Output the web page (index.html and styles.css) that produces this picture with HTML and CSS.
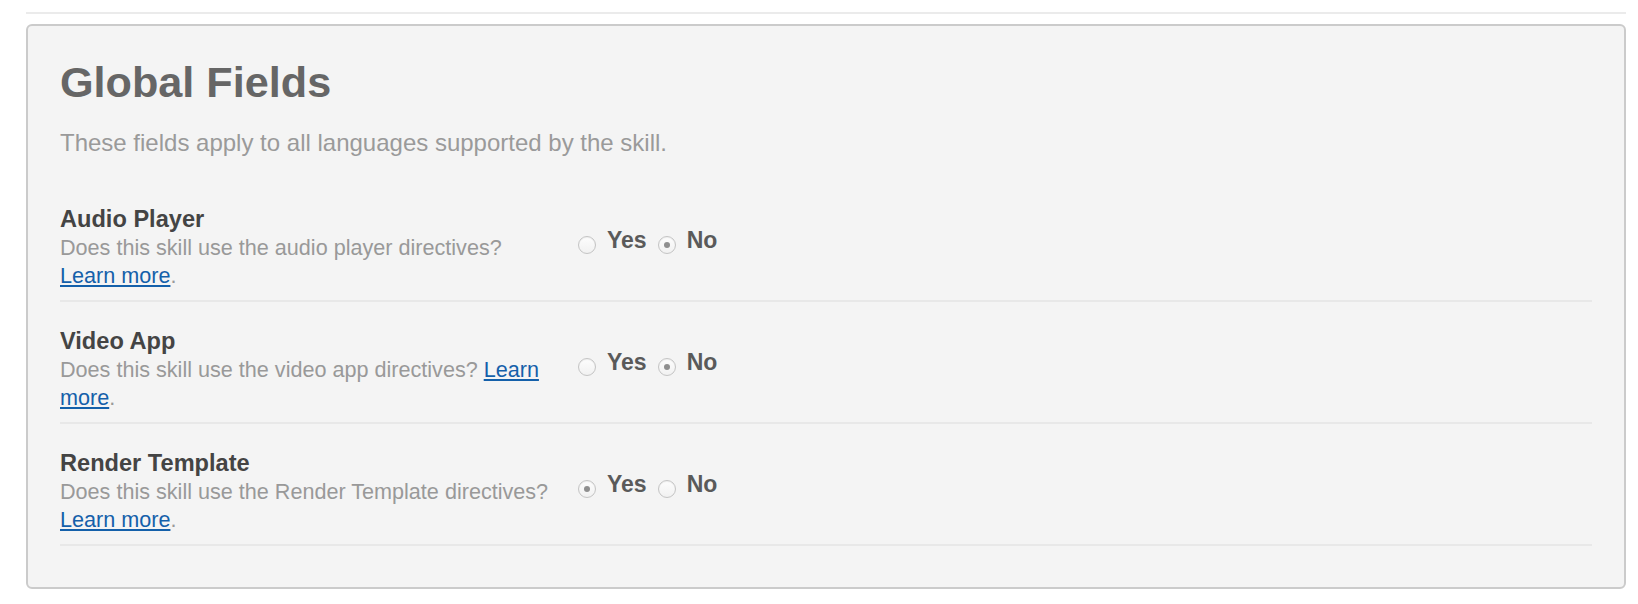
FILE: index.html
```html
<!DOCTYPE html>
<html lang="en">
<head>
<meta charset="utf-8">
<title>Global Fields</title>
<link rel="stylesheet" href="styles.css">
</head>
<body>
<div class="page">
  <hr class="top-rule">
  <section class="card">
    <h1 class="title">Global Fields</h1>
    <p class="subtitle">These fields apply to all languages supported by the skill.</p>

    <div class="field">
      <div class="field-text">
        <div class="field-label">Audio Player</div>
        <div class="field-desc">Does this skill use the audio player directives? <a href="#" class="link">Learn more</a>.</div>
      </div>
      <div class="choices">
        <label class="choice"><span class="radio"></span><span class="choice-text">Yes</span></label>
        <label class="choice"><span class="radio checked"></span><span class="choice-text">No</span></label>
      </div>
    </div>

    <div class="field">
      <div class="field-text">
        <div class="field-label">Video App</div>
        <div class="field-desc">Does this skill use the video app directives? <a href="#" class="link">Learn more</a>.</div>
      </div>
      <div class="choices">
        <label class="choice"><span class="radio"></span><span class="choice-text">Yes</span></label>
        <label class="choice"><span class="radio checked"></span><span class="choice-text">No</span></label>
      </div>
    </div>

    <div class="field">
      <div class="field-text">
        <div class="field-label">Render Template</div>
        <div class="field-desc">Does this skill use the Render Template directives? <a href="#" class="link">Learn more</a>.</div>
      </div>
      <div class="choices">
        <label class="choice"><span class="radio checked"></span><span class="choice-text">Yes</span></label>
        <label class="choice"><span class="radio"></span><span class="choice-text">No</span></label>
      </div>
    </div>
  </section>
</div>
</body>
</html>
```

FILE: styles.css
```css
html, body {
  margin: 0;
  padding: 0;
  background: #ffffff;
}

body {
  font-family: "Liberation Sans", Arial, Helvetica, sans-serif;
}

.page {
  padding: 12px 12px 0 26px;
}

.top-rule {
  margin: 0 0 10px 0;
  border: 0;
  height: 2px;
  background: #ebebeb;
}

.card {
  background: #f4f4f4;
  border: 2px solid #cbcbcb;
  border-radius: 6px;
  padding: 33px 32px 41px 32px;
}

.title {
  margin: 0;
  font-size: 43.2px;
  line-height: 47.5px;
  font-weight: bold;
  color: #666666;
}

.subtitle {
  margin: 22px 0 23px 0;
  font-size: 24px;
  line-height: 28.8px;
  color: #9a9a9a;
}

.field {
  display: flex;
  align-items: flex-start;
  padding: 24px 0 10px 0;
  border-bottom: 2px solid #e8e8e8;
}

.field-text {
  flex: 0 0 496px;
}

.field-label {
  font-size: 23.6px;
  line-height: 30px;
  font-weight: bold;
  color: #444444;
}

.field-desc {
  font-size: 21.6px;
  line-height: 28px;
  color: #999999;
}

.link {
  color: #1460aa;
  text-decoration: underline;
}

.choices {
  margin-left: 22px;
  margin-top: 21px;
  display: flex;
  align-items: baseline;
  gap: 11px;
  font-size: 23px;
  line-height: 30px;
  font-weight: bold;
  color: #5a5a5a;
}

.choice {
  display: inline-flex;
  align-items: baseline;
  gap: 11px;
}

.radio {
  display: inline-block;
  width: 18px;
  height: 18px;
  box-sizing: border-box;
  border-radius: 50%;
  border: 1px solid #c4c4c4;
  background: linear-gradient(#fdfdfd, #f1f1f1);
  box-shadow: inset 0 1px 1px rgba(0, 0, 0, 0.06);
  position: relative;
  top: 6px;
}

.radio.checked::after {
  content: "";
  position: absolute;
  left: 50%;
  top: 50%;
  width: 6px;
  height: 6px;
  margin: -3px 0 0 -3px;
  border-radius: 50%;
  background: #8f8f8f;
}
```
